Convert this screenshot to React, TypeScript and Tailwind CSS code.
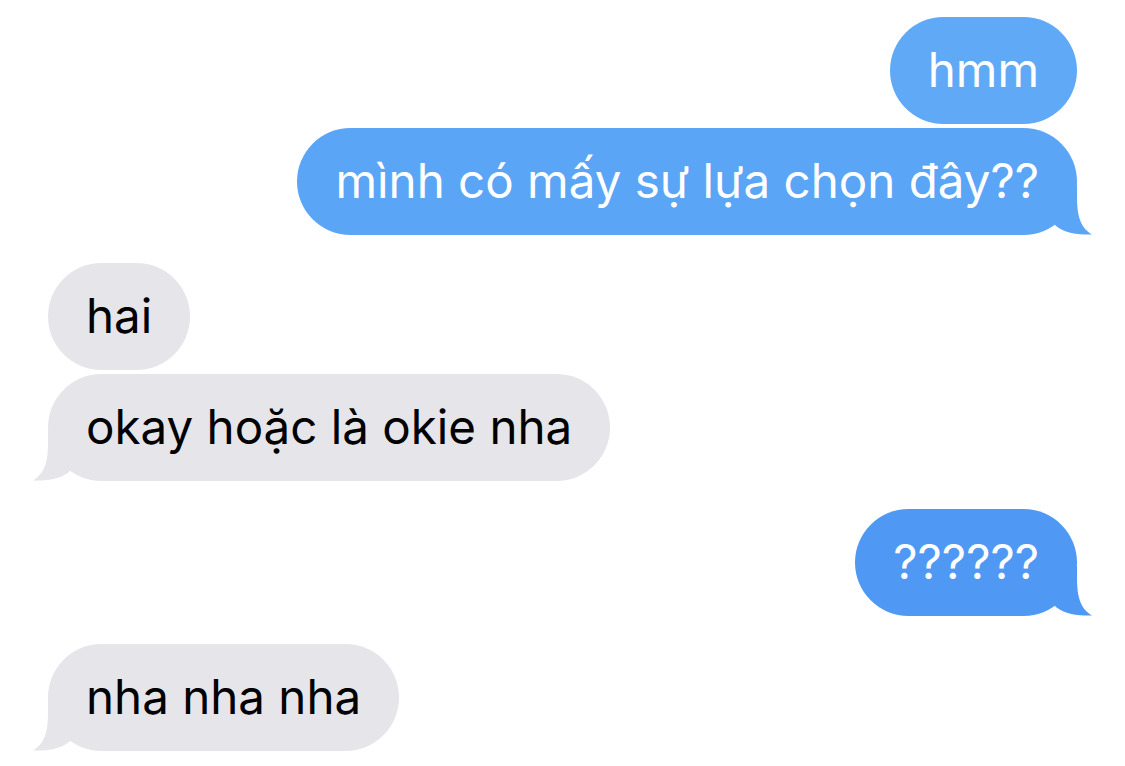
import React from "react";

type Msg = { text: string; tail?: boolean; bg: string; fill: string };

// tail drawn at the bottom corner, mirrored for incoming messages
function Tail({ fill, mine }: { fill: string; mine: boolean }) {
  return (
    <svg
      width="50"
      height="50"
      viewBox="0 0 50 50"
      className={`absolute bottom-0 ${mine ? "right-[-15px]" : "left-[-15px] -scale-x-100"}`}
    >
      <path d="M35 0 L35 12 C35 32 39 43 50 49.5 C41 50 23 49 14 41 L0 24 L0 0 Z" fill={fill} />
    </svg>
  );
}

function Bubble({ msg, mine }: { msg: Msg; mine: boolean }) {
  return (
    <div className={`flex ${mine ? "justify-end" : "justify-start"}`}>
      <div
        className={`relative flex h-[107px] items-center rounded-[54px] px-[38px] text-[47.5px] leading-none ${msg.bg} ${
          mine ? "text-white" : "text-black"
        }`}
      >
        {msg.tail && <Tail fill={msg.fill} mine={mine} />}
        <span className="relative -mt-[2px]">{msg.text}</span>
      </div>
    </div>
  );
}

const groups: { mine: boolean; msgs: Msg[] }[] = [
  {
    mine: true,
    msgs: [
      { text: "hmm", bg: "bg-[#60a9f7]", fill: "#60a9f7" },
      { text: "mình có mấy sự lựa chọn đây??", tail: true, bg: "bg-[#5aa5f6]", fill: "#5aa5f6" },
    ],
  },
  {
    mine: false,
    msgs: [
      { text: "hai", bg: "bg-[#e5e5ea]", fill: "#e5e5ea" },
      { text: "okay hoặc là okie nha", tail: true, bg: "bg-[#e5e5ea]", fill: "#e5e5ea" },
    ],
  },
  {
    mine: true,
    msgs: [{ text: "??????", tail: true, bg: "bg-[#4f98f4]", fill: "#4f98f4" }],
  },
  {
    mine: false,
    msgs: [{ text: "nha nha nha", tail: true, bg: "bg-[#e5e5ea]", fill: "#e5e5ea" }],
  },
];

export default function App() {
  return (
    <div
      className="flex h-[766px] w-[1125px] flex-col gap-[28px] overflow-hidden bg-white px-[48px] pt-[17px]"
      style={{ fontFamily: "Inter, 'Noto Sans', sans-serif" }}
    >
      {groups.map((g, i) => (
        <div key={i} className="flex flex-col gap-[4px]">
          {g.msgs.map((m, j) => (
            <Bubble key={j} msg={m} mine={g.mine} />
          ))}
        </div>
      ))}
    </div>
  );
}
